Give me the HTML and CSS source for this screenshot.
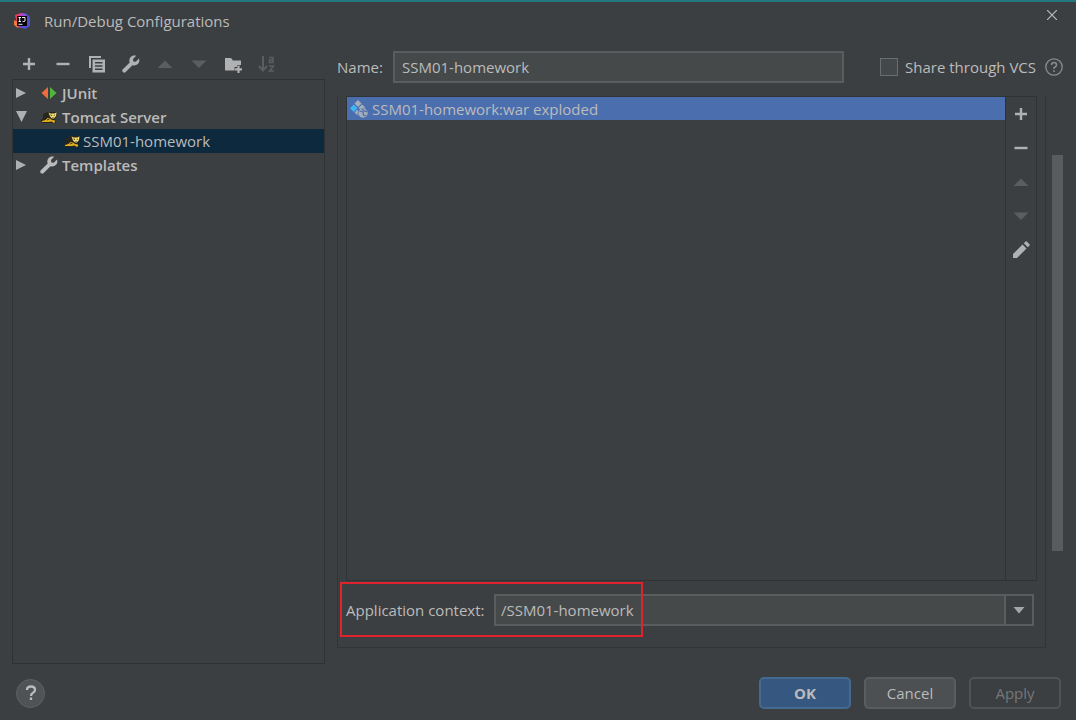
FILE: index.html
```html
<!DOCTYPE html>
<html lang="en">
<head>
<meta charset="utf-8">
<title>Run/Debug Configurations</title>
<link rel="stylesheet" href="styles.css">
</head>
<body>
<svg class="defs" aria-hidden="true">
  <symbol id="plus" viewBox="0 0 18 18"><path d="M9 3v12M3 9h12" fill="none" stroke="currentColor" stroke-width="2.4"/></symbol>
  <symbol id="minus" viewBox="0 0 18 18"><path d="M2.500 9h13" fill="none" stroke="currentColor" stroke-width="2.4"/></symbol>
  <symbol id="up" viewBox="0 0 18 18"><path d="M1.500 13L9 5.500L16.500 13z" fill="currentColor"/></symbol>
  <symbol id="down" viewBox="0 0 18 18"><path d="M1.500 5.500h15L9 13z" fill="currentColor"/></symbol>
  <symbol id="wrench" viewBox="0 0 18 18"><path d="M17 3.600L13.800 6.800L11.300 6.500L11 4L14.200.8C12 .1 9.800.5 8.500 2.200C7.200 3.800 7 5.700 7.700 7.400L.8 14.300C-.2 15.500.3 16.800 1.200 17.300C2 17.900 3 17.700 3.700 17L10.500 10.200C12.400 10.900 14.400 10.400 15.800 9.100C17.300 7.600 17.700 5.500 17 3.600z" fill="currentColor"/></symbol>
  <symbol id="tomcat" viewBox="0 0 18 18"><path d="M3 6l5-2h8l.5 4-1.500 3 1 4H2l-1-3 2-2z" fill="#28251d"/><path d="M2 14v-1l3.500-1 2-2 2.500.5 2 1.500 3 .5v1.500l-1 1-2.500-1.500L8.500 14z" fill="#dfb01f"/><path d="M8.500 4.500l2 1h3.500l2.500-1-.5 3.500-2 2.500h-2l-2-2z" fill="#f2dd75"/><path d="M10.500 7l1.500.5M14.800 7l-1 .5M12.500 9.500h1M7 12l2.500-1" stroke="#3d3218"/></symbol>
</svg>
<main class="dialog">
  <header class="titlebar">
    <svg class="app-icon" viewBox="0 0 18 18"><path d="M2 3l6-2 3 6-3 9-4-1-3-3 2-4z" fill="#ed3a62"/><path d="M1 8l5 3-1 5-4-3z" fill="#f47a3c"/><path d="M9 1l5 1 3 3v9l-5 3-6-2z" fill="#524fd5"/><path d="M8 1l5 1-1 4-6-1z" fill="#a24bd0"/><path d="M4 4h10v10H4z" fill="#080409"/><path d="M5.500 5.500h2.500M6.700 5.500v4M5.500 9.500h2.500M9 5.500h3v3.500q-1 1-2.500.3M5.500 12.300h4" fill="none" stroke="#eee" stroke-width="1"/></svg>
    <h1 class="title">Run/Debug Configurations</h1>
    <button class="close" aria-label="Close"><svg viewBox="0 0 10 10"><path d="M0 0l10 10M10 0L0 10" stroke="currentColor" stroke-width="1.200"/></svg></button>
  </header>
  <div class="content">
    <section class="sidebar">
      <div class="toolbar">
        <button class="tool" aria-label="Add"><svg class="icon"><use href="#plus"/></svg></button>
        <button class="tool" aria-label="Remove"><svg class="icon"><use href="#minus"/></svg></button>
        <button class="tool" aria-label="Copy"><svg class="icon" viewBox="0 0 18 18"><path d="M1 13V1h12v2H3v10z" fill="currentColor"/><path d="M4.500 4.500H17V17.500H4.500zM7 7v1.500h7.500V7zM7 10.300v1.500h7.500v-1.500zM7 13.500V15h7.500v-1.500z" fill="currentColor" fill-rule="evenodd"/></svg></button>
        <button class="tool" aria-label="Edit templates"><svg class="icon"><use href="#wrench"/></svg></button>
        <button class="tool" aria-label="Move up" disabled><svg class="icon"><use href="#up"/></svg></button>
        <button class="tool" aria-label="Move down" disabled><svg class="icon"><use href="#down"/></svg></button>
        <button class="tool" aria-label="New folder"><svg class="icon" viewBox="0 0 18 18"><path d="M1 3h6l2 2.500h8V10h-4v2h-2.500v3.500H1z" fill="currentColor"/><path d="M14.500 10.500v7.500M10.800 14.300h7.200" stroke="currentColor" stroke-width="2.200"/></svg></button>
        <button class="tool" aria-label="Sort" disabled><svg class="icon" viewBox="0 0 18 18"><path d="M5 1v14M1 11l4 4.500L9 11" fill="none" stroke="currentColor" stroke-width="2"/><path d="M11 2.500h4v5h-3.500V5H15M11 11h4.500l-4 5H16" fill="none" stroke="currentColor" stroke-width="1.500"/></svg></button>
      </div>
      <ul class="tree">
        <li class="row"><svg class="arrow" viewBox="0 0 12 12"><path d="M1 1l10 5-10 5z" fill="currentColor"/></svg><svg class="icon" viewBox="0 0 18 18"><path d="M8 3v12L1.500 9z" fill="#f26b3c"/><path d="M10 3v12l6.500-6z" fill="#4fb53b"/></svg><span>JUnit</span></li>
        <li class="row"><svg class="arrow" viewBox="0 0 12 12"><path d="M1 0h11L6.500 11z" fill="currentColor"/></svg><svg class="icon"><use href="#tomcat"/></svg><span>Tomcat Server</span></li>
        <li class="row child selected"><svg class="icon"><use href="#tomcat"/></svg><span>SSM01-homework</span></li>
        <li class="row"><svg class="arrow" viewBox="0 0 12 12"><path d="M1 1l10 5-10 5z" fill="currentColor"/></svg><svg class="icon"><use href="#wrench"/></svg><span>Templates</span></li>
      </ul>
    </section>
    <section class="editor">
      <div class="name-row">
        <label class="name-label" for="name">Name:</label>
        <input class="field name-field" id="name" type="text" value="SSM01-homework">
        <input class="check" id="share" type="checkbox">
        <label for="share">Share through VCS</label>
        <button class="hint" aria-label="About sharing"><svg viewBox="0 0 18 18"><circle cx="9" cy="9" r="8.200" fill="none" stroke="currentColor" stroke-width="1.300"/><path d="M6.500 7q0-2.500 2.500-2.500T11.500 7Q11.500 8.200 10 9T9 11M9 12.300v1.600" fill="none" stroke="currentColor" stroke-width="1.500"/></svg></button>
      </div>
      <div class="scroll">
        <div class="panel">
          <div class="deploy">
            <ul class="artifacts">
              <li class="artifact"><svg class="icon" viewBox="0 0 18 18"><path d="M8 0l3.500 3.500L8 7 4.500 3.500z" fill="#a4afbd"/><path d="M3.800 4.500L7.500 8.300 3.800 12 0 8.300z" fill="#3fb6f0"/><path d="M12 4.500l3.500 3-3 .5-2.500 1-1.500-1zM7.500 9.500l.5 1.500-.5 3 .8 2L4.500 12.500z" fill="#a4afbd"/><circle cx="13" cy="13" r="4.700" fill="#a4afbd"/><path d="M9.500 11l3.500 1 .5 3 2.500 1M12 9l2 2 3 .5" fill="none" stroke="#4b6eaf" stroke-width="1.300"/></svg><span>SSM01-homework:war exploded</span></li>
            </ul>
            <div class="side-tools">
              <button class="tool" aria-label="Add artifact"><svg class="icon"><use href="#plus"/></svg></button>
              <button class="tool" aria-label="Remove artifact"><svg class="icon"><use href="#minus"/></svg></button>
              <button class="tool" aria-label="Artifact up" disabled><svg class="icon"><use href="#up"/></svg></button>
              <button class="tool" aria-label="Artifact down" disabled><svg class="icon"><use href="#down"/></svg></button>
              <button class="tool" aria-label="Edit artifact"><svg class="icon" viewBox="0 0 18 18"><path d="M1 17v-4L10.500 3.500l4 4L5 17zM11.800 2.200L13.500.5q.7-.5 1.300 0l2.700 2.700q.5.600 0 1.300l-1.700 1.700z" fill="currentColor"/></svg></button>
            </div>
          </div>
          <div class="context">
            <label class="context-label" for="context">Application context:</label>
            <div class="combo">
              <input class="combo-text" id="context" type="text" value="/SSM01-homework">
              <button class="combo-arrow" aria-label="Show contexts"><svg viewBox="0 0 12 7"><path d="M.5 0h11L6 6.500z" fill="currentColor"/></svg></button>
            </div>
            <div class="highlight"></div>
          </div>
        </div>
        <div class="track"><div class="thumb"></div></div>
      </div>
    </section>
  </div>
  <footer class="footer">
    <button class="help" aria-label="Help"><svg viewBox="0 0 18 18"><path d="M5 6q0-3.500 4-3.500T13 6Q13 7.700 11 8.700T9 12M9 13.500v2.500" fill="none" stroke="currentColor" stroke-width="2.300"/></svg></button>
    <button class="btn primary">OK</button>
    <button class="btn">Cancel</button>
    <button class="btn" disabled>Apply</button>
  </footer>
</main>
</body>
</html>
```
FILE: styles.css
```css
* { box-sizing: border-box; }
body {
  margin: 0;
  background: #3c3f41;
  color: #bbbbbb;
  font: 15px/24px "Open Sans", "Noto Sans", sans-serif;
}
button, input { font: inherit; color: inherit; margin: 0; padding: 0; }
button { display: flex; align-items: center; justify-content: center; border: 0; background: none; }
ul { margin: 0; padding: 0; list-style: none; }
svg { flex: none; display: block; }
.defs { position: absolute; width: 0; height: 0; }
.icon { width: 18px; height: 18px; }

.dialog { height: 100vh; display: flex; flex-direction: column; border-top: 2px solid #21797d; }

.titlebar { display: flex; align-items: center; height: 38px; padding: 0 18px 0 13px; flex: none; }
.app-icon { width: 18px; height: 18px; margin-right: 13px; }
.title { flex: 1; margin: 0; font-size: 15px; font-weight: 400; }
.close { width: 12px; height: 26px; align-self: flex-start; }
.close svg { width: 10px; height: 10px; }

.content { flex: 1; min-height: 0; display: flex; gap: 12px; padding: 8px 13px 0 12px; }
.sidebar { width: 313px; flex: none; display: flex; flex-direction: column; }
.toolbar { display: flex; height: 31px; flex: none; }
.tool { width: 34px; height: 32px; color: #afb1b3; }
.tool:disabled { color: #5b5e60; }

.tree { flex: 1; padding-top: 1px; border: 1px solid #2f3233; }
.row { display: flex; align-items: center; height: 24px; padding-left: 2px; font-weight: 600; }
.row .icon { margin-right: 4px; }
.arrow { width: 12px; height: 12px; margin-right: 13px; color: #adafb0; }
.child { padding-left: 50px; font-weight: 400; }
.child .icon { margin-right: 2px; }
.selected { background: #0d293e; }

.editor { flex: 1; min-width: 0; display: flex; flex-direction: column; gap: 11px; }
.name-row { display: flex; align-items: center; height: 37px; padding-top: 1px; flex: none; }
.name-label { width: 56px; }
.field { height: 32px; border: 2px solid #5a5d5e; background: #45494a; outline: 0; }
.name-field { flex: 1; min-width: 0; padding: 0 7px; margin-right: 36px; }
.check { appearance: none; width: 18px; height: 18px; margin-right: 7px; border: 1px solid #6b6e70; background: #43494a; }
.hint { width: 18px; height: 18px; margin-left: 9px; color: #8a8d8f; }
.hint svg { width: 18px; height: 18px; }

.scroll { flex: 1; min-height: 0; display: flex; gap: 6px; }
.panel { flex: 1; min-width: 0; display: flex; flex-direction: column; margin-bottom: 16px; padding: 0 8px 21px 8px; border: solid #323536; border-width: 0 1px 1px; }
.deploy { flex: 1; display: flex; border: 1px solid #303334; }
.artifacts { flex: 1; border-right: 1px solid #303334; }
.artifact { display: flex; align-items: center; gap: 4px; height: 23px; padding-left: 3px; background: #4b6eaf; }
.side-tools { width: 30px; display: flex; flex-direction: column; }
.side-tools .tool { width: 30px; height: 34px; }

.context { position: relative; display: flex; align-items: center; padding: 13px 3px 0 0; }
.context-label { width: 148px; }
.combo { flex: 1; min-width: 0; display: flex; height: 32px; border: 2px solid #5a5d5e; }
.combo-text { flex: 1; min-width: 0; padding: 0 5px; border: 0; background: #45494a; outline: 0; }
.combo-arrow { width: 28px; border-left: 2px solid #5a5d5e; color: #a4a6a8; }
.combo-arrow svg { width: 12px; height: 7px; }
.highlight { position: absolute; left: -6px; top: 1px; width: 303px; height: 55px; border: 2px solid #e0222d; pointer-events: none; }

.track { width: 11px; padding: 59px 0 113px; display: flex; }
.thumb { flex: 1; background: #595c5e; }

.footer { display: flex; align-items: center; gap: 13px; height: 56px; padding: 2px 15px 0 16px; flex: none; }
.help { width: 29px; height: 29px; margin-right: auto; border-radius: 50%; background: #505355; border: 1px solid #5e6162; }
.help svg { width: 18px; height: 18px; }
.btn { width: 92px; height: 32px; border: 2px solid #5a5d5e; border-radius: 5px; background: #4c5052; }
.primary { background: #365880; border-color: #456a90; font-weight: 700; }
.btn:disabled { background: none; border-color: #505355; color: #74777a; }
```
